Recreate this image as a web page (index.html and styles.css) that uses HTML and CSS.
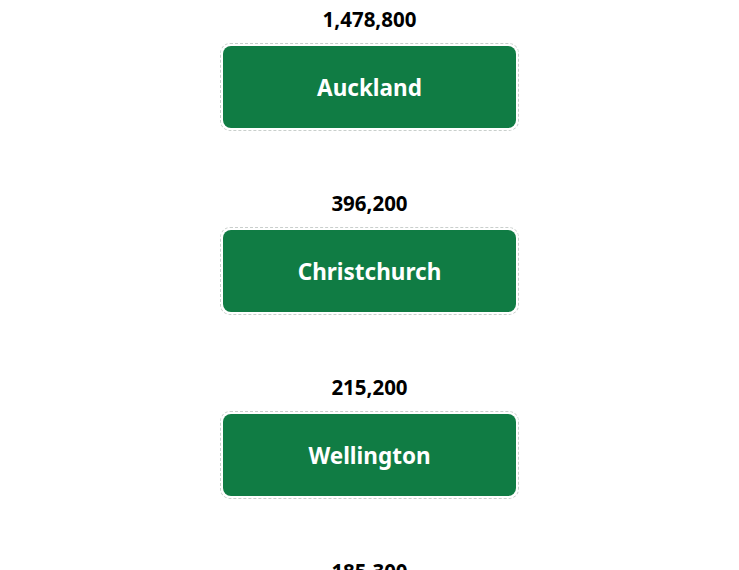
FILE: index.html
```html
<!DOCTYPE html>
<html lang="en">
<head>
  <meta charset="UTF-8">
  <title>City Populations</title>
  <link rel="stylesheet" href="styles.css">
</head>
<body>
  <div class="city-list">
    <div class="city">
      <div class="population">1,478,800</div>
      <div class="city-frame"><button class="city-btn">Auckland</button></div>
    </div>
    <div class="city">
      <div class="population">396,200</div>
      <div class="city-frame"><button class="city-btn">Christchurch</button></div>
    </div>
    <div class="city">
      <div class="population">215,200</div>
      <div class="city-frame"><button class="city-btn">Wellington</button></div>
    </div>
    <div class="city">
      <div class="population">185,300</div>
      <div class="city-frame"><button class="city-btn">Hamilton</button></div>
    </div>
  </div>
</body>
</html>
```

FILE: styles.css
```css
body {
  font-family: 'Noto Sans', 'Open Sans', sans-serif;
  background-color: #fff;
  margin: 0;
  padding-top: 5px;
}

.city-list {
  display: flex;
  flex-direction: column;
  align-items: center;
  gap: 58px;
}

.city {
  display: flex;
  flex-direction: column;
  align-items: center;
}

.population {
  font-size: 20.5px;
  font-weight: bold;
  line-height: 28px;
  color: #000;
  margin-bottom: 10px;
}

.city-frame {
  border: 1px dashed #c9cfcc;
  border-radius: 10px;
  padding: 2px;
}

.city-btn {
  display: block;
  width: 293px;
  height: 82px;
  background-color: #107c44;
  color: #fff;
  border: none;
  border-radius: 8px;
  font-family: inherit;
  font-size: 22.5px;
  font-weight: bold;
  cursor: pointer;
}
```
